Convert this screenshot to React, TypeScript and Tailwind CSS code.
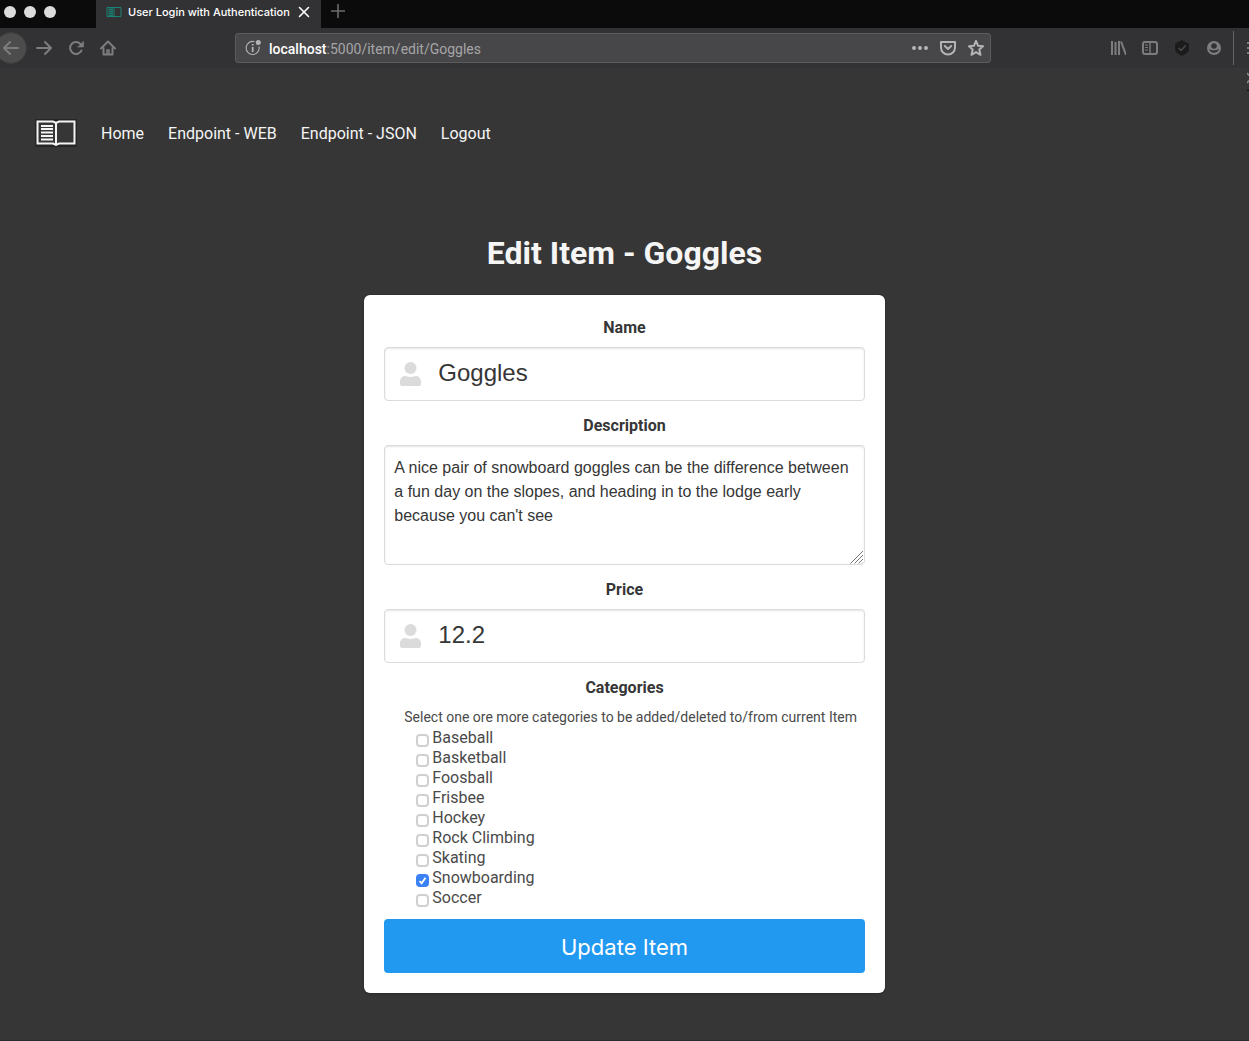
import React, { useState } from "react";

const categories = ["Baseball", "Basketball", "Foosball", "Frisbee", "Hockey", "Rock Climbing", "Skating", "Snowboarding", "Soccer"];

function Book({ className }: { className: string }) {
  return (
    <svg viewBox="0 0 42 28" className={className} fill="none" stroke="currentColor" aria-hidden="true">
      <path d="M2.5 2.5H18L21 4L24 2.5H39.5V24.5H24L21 26L18 24.5H2.5Z" fill="#363636" strokeWidth="2" />
      <path d="M21 3V26" strokeWidth="2" />
      <path d="M6 7H18M6 10H18M6 13.5H18M6 17H18M6 20.5H18" strokeWidth="1.9" />
    </svg>
  );
}

function IconButton({ label, children, className = "" }: { label: string; children: React.ReactNode; className?: string }) {
  return (
    <button type="button" aria-label={label} className={`flex size-4 shrink-0 items-center justify-center ${className}`}>
      <svg viewBox="0 0 16 16" className="size-4" fill="none" stroke="currentColor" strokeWidth="2" strokeLinecap="round" strokeLinejoin="round">
        {children}
      </svg>
    </button>
  );
}

function Browser() {
  return (
    <header className="relative font-[Inter,sans-serif]">
      <div className="flex h-7 bg-[#0b0b0c]">
        <div className="flex w-24 gap-2 pl-1 pt-1.5">
          <span className="size-3 rounded-full bg-[#dcdcdc]" />
          <span className="size-3 rounded-full bg-[#dcdcdc]" />
          <span className="size-3 rounded-full bg-[#dcdcdc]" />
        </div>
        <div className="flex w-[225px] items-center bg-[#323234] pb-1 pl-2.5 text-white">
          <svg viewBox="0 0 16 12" className="h-3 w-4 shrink-0" fill="none" stroke="#1a8073" aria-hidden="true">
            <path d="M1 1.5H15V10.5H1ZM8 1.5V11.5" />
            <path d="M3 3.5H7M3 5.5H7M3 7.5H7M3 9.5H7" />
            <path d="M2 2H7V10H2Z" fill="#1a8073" fillOpacity="0.4" stroke="none" />
          </svg>
          <span className="ml-1.5 w-[168px] whitespace-nowrap text-[11px] font-medium">User Login with Authentication</span>
          <IconButton label="Close tab"><path d="M3.5 3.5L12.5 12.5M12.5 3.5L3.5 12.5" strokeWidth="1.6" /></IconButton>
        </div>
        <IconButton label="New tab" className="ml-2 mt-[3px] text-[#6c6c6c]"><path d="M9 1.5V14.5M2.5 8H15.5" strokeWidth="1.6" /></IconButton>
      </div>
      <div className="flex h-10 items-center bg-[#323234] text-[#7d7d7e]">
        <div className="flex w-[235px] items-center">
          <button type="button" aria-label="Back" className="-ml-[5px] flex size-8 shrink-0 items-center justify-center rounded-full border border-[#3b3b3c] bg-[#4c4c4d]">
            <svg viewBox="0 0 16 16" className="size-4" fill="none" stroke="currentColor" strokeWidth="2" strokeLinecap="round" strokeLinejoin="round">
              <path d="M15 8H1M7 2L1 8L7 14" />
            </svg>
          </button>
          <div className="ml-[9px] flex gap-4">
            <IconButton label="Forward"><path d="M1 8H15M9 2L15 8L9 14" /></IconButton>
            <IconButton label="Reload"><path d="M13.5 10.5A6 6 0 1 1 13 4.5" /><path d="M15.5 1.5V7H10Z" fill="currentColor" strokeWidth="0.6" /></IconButton>
            <IconButton label="Home page"><path d="M1 8.5L8 1.5L15 8.5" /><path d="M3.5 8V14.5H12.5V8" /><path d="M7 14V10H9V14" strokeWidth="1.6" /></IconButton>
          </div>
        </div>
        <div className="flex h-[30px] w-[756px] items-center rounded-[3px] border border-[#5b5b5d] bg-[#474749] pl-2 pr-1.5 text-[#b4b4b5]">
          <svg viewBox="0 0 18 18" className="size-[18px] shrink-0" aria-hidden="true">
            <path d="M10.5 2.7A6.5 6.5 0 1 0 15 7.5" fill="none" stroke="currentColor" strokeWidth="1.1" />
            <circle cx="14.3" cy="3.5" r="2.5" fill="currentColor" />
            <path d="M8.7 5V6.6M8.7 8V13" stroke="currentColor" strokeWidth="1.8" />
          </svg>
          <div className="ml-[7px] grow pt-0.5 font-[Roboto,sans-serif] text-[14px]"><span className="font-medium text-white">localhost</span><span className="text-[#a5a5a6]">:5000/item/edit/Goggles</span></div>
          <div className="flex gap-3">
            <IconButton label="Page actions"><g fill="currentColor" stroke="none"><circle cx="2" cy="8" r="2" /><circle cx="8" cy="8" r="2" /><circle cx="14" cy="8" r="2" /></g></IconButton>
            <IconButton label="Save to Pocket"><path d="M1 2H15V7.5A7 7 0 0 1 1 7.5Z" /><path d="M4.8 6L8 9L11.2 6" /></IconButton>
            <IconButton label="Bookmark"><path d="M8 1L10 5.7L15 6.3L11.3 9.6L12.5 14.8L8 12.1L3.5 14.8L4.7 9.6L1 6.3L6 5.7Z" /></IconButton>
          </div>
        </div>
        <div className="ml-auto flex h-full shrink-0 items-center gap-4 overflow-hidden">
          <IconButton label="Library"><path d="M2 1V15M5.5 2V15M9 1V15M11 1.5L16 15" strokeWidth="2" strokeLinecap="butt" /></IconButton>
          <IconButton label="Sidebars"><rect x="1" y="2" width="14" height="12" rx="2" /><path d="M8 2V14" strokeWidth="1.4" /><path d="M3.5 5H5.5M3.5 7.5H5.5M3.5 10H5.5" strokeWidth="1" /></IconButton>
          <IconButton label="Shield" className="text-[#1b1b1c]"><path d="M8 0.8L14.3 4V10.5C13 13 10.5 14.5 8 15.3C5.5 14.5 3 13 1.7 10.5V4Z" fill="currentColor" strokeWidth="1" /><path d="M5 8.3L7.2 10.5L11.3 5.8" stroke="#4a4a4b" strokeWidth="1.3" /></IconButton>
          <IconButton label="Account"><circle cx="8" cy="8" r="7" fill="currentColor" stroke="none" /><circle cx="8" cy="6" r="2.8" fill="#323234" stroke="none" /><path d="M3 8.8C5.5 10.8 10.5 10.8 13 8.8C12 14 4 14 3 8.8Z" fill="#323234" stroke="none" /></IconButton>
          <div className="-ml-[5px] flex h-[34px] w-4 items-center justify-end border-l border-[#646466]">
            <button type="button" aria-label="Open menu" className="flex w-0.5 flex-col gap-[3px]">
              <span className="h-0.5 bg-[#7d7d7e]" />
              <span className="h-0.5 bg-[#7d7d7e]" />
              <span className="h-0.5 bg-[#7d7d7e]" />
            </button>
          </div>
        </div>
      </div>
      <svg viewBox="0 0 2 20" className="absolute right-0 top-[71px] h-5 w-0.5" aria-hidden="true">
        <path d="M0 2L2 4.5M0 12L2 9.5" stroke="#8a8a8a" strokeWidth="1.6" />
        <path d="M0 19.5H2" stroke="#0b0b0c" />
      </svg>
    </header>
  );
}

const labelStyle = "mb-1.5 block w-full text-center font-bold leading-[26px] text-[#363636]";

function IconField({ id, label, initial }: { id: string; label: string; initial: string }) {
  const [value, setValue] = useState(initial);
  return (
    <div className="mb-3">
      <label htmlFor={id} className={labelStyle}>{label}</label>
      <div className="relative">
        <input
          id={id}
          value={value}
          onChange={(e) => setValue(e.target.value)}
          className="block h-[54px] w-full rounded border border-[#dbdbdb] bg-white pb-0.5 pl-[53px] pr-3 font-['Liberation_Sans',sans-serif] text-2xl text-[#363636] shadow-[inset_0_1px_2px_rgba(10,10,10,0.1)] outline-none focus:border-[#209cee]"
        />
        <svg viewBox="0 0 21 24" className="pointer-events-none absolute left-4 top-[15px] h-6 w-[21px]" fill="#dbdbdb" aria-hidden="true">
          <circle cx="10.5" cy="6" r="6" />
          <path d="M5 14C7 14 7.5 15 10.5 15S14 14 16 14C19 14 21 16.5 21 19.5V22A2 2 0 0 1 19 24H2A2 2 0 0 1 0 22V19.5C0 16.5 2 14 5 14Z" />
        </svg>
      </div>
    </div>
  );
}

export default function App() {
  const [description, setDescription] = useState("A nice pair of snowboard goggles can be the difference between a fun day on the slopes, and heading in to the lodge early because you can't see");
  return (
    <div className="flex min-h-screen flex-col border-b border-[#2b2b2b] bg-[#363636] font-[Roboto,sans-serif] text-base text-[#363636]">
      <Browser />
      <nav aria-label="Main" className="mt-10 flex items-center gap-6 pl-[35px] leading-[26px] text-[#f5f5f5]">
        <a href="#home" aria-label="Library home" className="h-[50px] py-[11px]">
          <Book className="h-7 w-[42px] bg-[#252525]" />
        </a>
        <a href="#home" className="pt-0.5">Home</a>
        <a href="#web" className="pt-0.5">Endpoint - WEB</a>
        <a href="#json" className="pt-0.5">Endpoint - JSON</a>
        <a href="#logout" className="pt-0.5">Logout</a>
      </nav>
      <main className="mt-[77px] pb-[47px]">
        <h1 className="mb-6 text-center text-[32px] font-bold leading-9 text-[#f5f5f5]">Edit Item - Goggles</h1>
        <form onSubmit={(e) => e.preventDefault()} className="mx-auto w-5/12 rounded-md bg-white p-5 shadow-[0_2px_3px_rgba(10,10,10,0.1),0_0_0_1px_rgba(10,10,10,0.1)]">
          <IconField id="name" label="Name" initial="Goggles" />
          <div className="mb-3">
            <label htmlFor="description" className={labelStyle}>Description</label>
            <div className="relative">
              <textarea
                id="description"
                value={description}
                onChange={(e) => setDescription(e.target.value)}
                className="block h-[120px] w-full resize-y rounded border border-[#dbdbdb] bg-white px-[9px] pt-2.5 font-['Liberation_Sans',sans-serif] text-base leading-6 shadow-[inset_0_1px_2px_rgba(10,10,10,0.1)] outline-none focus:border-[#209cee]"
              />
              <svg viewBox="0 0 14 14" className="pointer-events-none absolute bottom-px right-px size-3.5 bg-white" stroke="#777777" aria-hidden="true">
                <path d="M0.5 13.5L13 1M4.5 13.5L13 5M8.5 13.5L13 9M12 13.5L13 12.5" />
              </svg>
            </div>
          </div>
          <IconField id="price" label="Price" initial="12.2" />
          <fieldset className="mb-3 min-w-0 text-[#4a4a4a]">
            <legend className={labelStyle}>Categories</legend>
            <p className="h-5 whitespace-nowrap pl-5 text-[14px] leading-5">Select one ore more categories to be added/deleted to/from current Item</p>
            <ul className="pl-8">
              {categories.map((name) => (
                <li key={name} className="h-5">
                  <label className="flex w-max items-center gap-[3px] leading-[22px]">
                    <span className="relative mt-1 flex size-[13px]">
                      <input
                        type="checkbox"
                        defaultChecked={name === "Snowboarding"}
                        className="peer size-[13px] appearance-none rounded-[4px] border-2 border-[#d0d0d0] bg-white checked:border-[#3b82f6] checked:bg-[#3b82f6]"
                      />
                      <svg viewBox="0 0 13 13" className="pointer-events-none absolute inset-0 hidden size-[13px] peer-checked:block" fill="none" stroke="white" strokeWidth="1.8" aria-hidden="true">
                        <path d="M3.5 7L5.6 9.3L9.5 3.7" />
                      </svg>
                    </span>
                    {name}
                  </label>
                </li>
              ))}
            </ul>
          </fieldset>
          <button type="submit" className="block h-[54px] w-full rounded bg-[#2299f0] pt-0.5 font-[Inter,sans-serif] text-[22px] text-white">Update Item</button>
        </form>
      </main>
    </div>
  );
}
